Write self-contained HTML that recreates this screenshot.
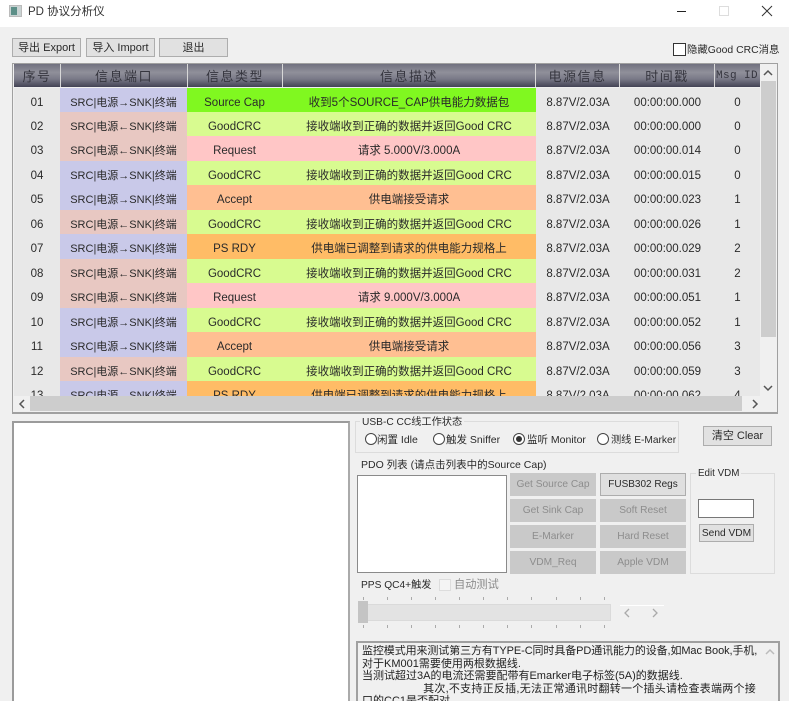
<!DOCTYPE html>
<html><head><meta charset="utf-8">
<style>
html,body{margin:0;padding:0;background:#f0f0f0;width:789px;height:701px;overflow:hidden}
#w{position:relative;width:789px;height:701px;overflow:hidden;font-family:"Liberation Sans","Noto Sans CJK SC",sans-serif;font-size:11px;color:#2a2a2a;background:#f0f0f0;filter:blur(.3px)}
.a{position:absolute;box-sizing:border-box;white-space:nowrap}
.btn{position:absolute;box-sizing:border-box;background:#e1e1e1;border:1px solid #adadad;text-align:center;color:#2a2a2a;font-size:11px}
.dis{position:absolute;box-sizing:border-box;background:#c9c9c9;text-align:center;color:#8d8d8d;font-size:10.2px;height:23px;line-height:23px;width:86px}
.h{position:absolute;top:64px;height:24px;line-height:25px;text-align:center;font-size:13px;color:#36363f;background:linear-gradient(#70707f,#90909a 35%,#7a7a88 62%,#3c3c4e);border-right:1px solid #d8d8d8;box-sizing:border-box;letter-spacing:1.5px;overflow:hidden}
.tb{position:absolute;left:14px;top:87px;width:746px;height:309px;overflow:hidden;background:#efefef}
.r{position:absolute;left:0;width:746px;height:25px;line-height:31px;font-size:11.5px}
.r div{position:absolute;top:0;height:25px;text-align:center;overflow:hidden;white-space:nowrap;box-sizing:border-box}
.c1{left:0;width:46px;background:#e8e8e8}
.c2{left:46px;width:127px;font-size:11px}
.c3{left:173px;width:95px}
.c4{left:268px;width:254px}
.c5{left:522px;width:84px;background:#e8e8e8}
.c6{left:606px;width:95px;background:#e8e8e8}
.c7{left:701px;width:45px;background:#e8e8e8}
.b{background:#c9c9e9}.p{background:#e8c8c2}
.g{background:#d8fb90}.s{background:#80f820}.q{background:#ffc6c6}.k{background:#ffbf92}.y{background:#ffbc66}
.radio{position:absolute;width:12px;height:12px;border:1px solid #444;border-radius:50%;background:#fff;box-sizing:border-box}
.tick{position:absolute;width:1px;height:3px;background:#aaa}
</style></head><body><div id="w">
<div class="a" style="left:0;top:0;width:789px;height:27px;background:#fff"></div>
<div class="a" style="left:9px;top:5px;width:13px;height:12px;background:#c9d3d3;border:1px solid #bbb"><div style="width:6px;height:8px;margin:1px;background:#5c8f88"></div></div>
<div class="a" style="left:28px;top:4px;font-size:11.5px;line-height:16px;color:#333">PD 协议分析仪</div>
<div class="a" style="left:677px;top:11px;width:9px;height:1px;background:#222"></div>
<div class="a" style="left:719px;top:6px;width:10px;height:10px;border:1px solid #ddd"></div>
<svg class="a" style="left:761px;top:5px" width="12" height="12" viewBox="0 0 12 12"><path d="M1 1L11 11M11 1L1 11" stroke="#333" stroke-width="1" fill="none"/></svg>

<div class="btn" style="left:12px;top:38px;width:69px;height:19px;line-height:18px">导出 Export</div>
<div class="btn" style="left:86px;top:38px;width:69px;height:19px;line-height:18px">导入 Import</div>
<div class="btn" style="left:159px;top:38px;width:69px;height:19px;line-height:18px">退出</div>

<div class="a" style="left:673px;top:43px;width:13px;height:13px;border:1px solid #333;background:#fff"></div>
<div class="a" style="left:687px;top:44px;font-size:10.4px;line-height:14px">隐藏Good CRC消息</div>

<div class="a" style="left:12px;top:63px;width:766px;height:351px;border:1px solid #a0a0a0;border-bottom:2px solid #a0a0a0;background:#f0f0f0"></div>
<div class="h" style="left:14px;width:47px">序号</div>
<div class="h" style="left:61px;width:127px">信息端口</div>
<div class="h" style="left:188px;width:95px">信息类型</div>
<div class="h" style="left:283px;width:253px">信息描述</div>
<div class="h" style="left:536px;width:84px">电源信息</div>
<div class="h" style="left:620px;width:95px">时间戳</div>
<div class="h" style="left:715px;width:45px;font-family:'Liberation Mono','Noto Sans CJK SC',monospace;font-size:11px;letter-spacing:.4px;border:0;text-align:left;padding-left:1px">Msg&nbsp;ID</div>

<div class="tb">
<div class="r" style="top:.5px"><div class="c1">01</div><div class="c2 b">SRC|电源→SNK|终端</div><div class="c3 s">Source Cap</div><div class="c4 s">收到5个SOURCE_CAP供电能力数据包</div><div class="c5">8.87V/2.03A</div><div class="c6">00:00:00.000</div><div class="c7">0</div></div>
<div class="r" style="top:25px"><div class="c1">02</div><div class="c2 p">SRC|电源←SNK|终端</div><div class="c3 g">GoodCRC</div><div class="c4 g">接收端收到正确的数据并返回Good CRC</div><div class="c5">8.87V/2.03A</div><div class="c6">00:00:00.000</div><div class="c7">0</div></div>
<div class="r" style="top:49.4px"><div class="c1">03</div><div class="c2 p">SRC|电源←SNK|终端</div><div class="c3 q">Request</div><div class="c4 q">请求 5.000V/3.000A</div><div class="c5">8.87V/2.03A</div><div class="c6">00:00:00.014</div><div class="c7">0</div></div>
<div class="r" style="top:73.9px"><div class="c1">04</div><div class="c2 b">SRC|电源→SNK|终端</div><div class="c3 g">GoodCRC</div><div class="c4 g">接收端收到正确的数据并返回Good CRC</div><div class="c5">8.87V/2.03A</div><div class="c6">00:00:00.015</div><div class="c7">0</div></div>
<div class="r" style="top:98.3px"><div class="c1">05</div><div class="c2 b">SRC|电源→SNK|终端</div><div class="c3 k">Accept</div><div class="c4 k">供电端接受请求</div><div class="c5">8.87V/2.03A</div><div class="c6">00:00:00.023</div><div class="c7">1</div></div>
<div class="r" style="top:122.8px"><div class="c1">06</div><div class="c2 p">SRC|电源←SNK|终端</div><div class="c3 g">GoodCRC</div><div class="c4 g">接收端收到正确的数据并返回Good CRC</div><div class="c5">8.87V/2.03A</div><div class="c6">00:00:00.026</div><div class="c7">1</div></div>
<div class="r" style="top:147.2px"><div class="c1">07</div><div class="c2 b">SRC|电源→SNK|终端</div><div class="c3 y">PS RDY</div><div class="c4 y">供电端已调整到请求的供电能力规格上</div><div class="c5">8.87V/2.03A</div><div class="c6">00:00:00.029</div><div class="c7">2</div></div>
<div class="r" style="top:171.7px"><div class="c1">08</div><div class="c2 p">SRC|电源←SNK|终端</div><div class="c3 g">GoodCRC</div><div class="c4 g">接收端收到正确的数据并返回Good CRC</div><div class="c5">8.87V/2.03A</div><div class="c6">00:00:00.031</div><div class="c7">2</div></div>
<div class="r" style="top:196.1px"><div class="c1">09</div><div class="c2 p">SRC|电源←SNK|终端</div><div class="c3 q">Request</div><div class="c4 q">请求 9.000V/3.000A</div><div class="c5">8.87V/2.03A</div><div class="c6">00:00:00.051</div><div class="c7">1</div></div>
<div class="r" style="top:220.6px"><div class="c1">10</div><div class="c2 b">SRC|电源→SNK|终端</div><div class="c3 g">GoodCRC</div><div class="c4 g">接收端收到正确的数据并返回Good CRC</div><div class="c5">8.87V/2.03A</div><div class="c6">00:00:00.052</div><div class="c7">1</div></div>
<div class="r" style="top:245px"><div class="c1">11</div><div class="c2 b">SRC|电源→SNK|终端</div><div class="c3 k">Accept</div><div class="c4 k">供电端接受请求</div><div class="c5">8.87V/2.03A</div><div class="c6">00:00:00.056</div><div class="c7">3</div></div>
<div class="r" style="top:269.5px"><div class="c1">12</div><div class="c2 p">SRC|电源←SNK|终端</div><div class="c3 g">GoodCRC</div><div class="c4 g">接收端收到正确的数据并返回Good CRC</div><div class="c5">8.87V/2.03A</div><div class="c6">00:00:00.059</div><div class="c7">3</div></div>
<div class="r" style="top:293.9px"><div class="c1">13</div><div class="c2 b">SRC|电源→SNK|终端</div><div class="c3 y">PS RDY</div><div class="c4 y">供电端已调整到请求的供电能力规格上</div><div class="c5">8.87V/2.03A</div><div class="c6">00:00:00.062</div><div class="c7">4</div></div>
</div>

<!-- vertical scrollbar -->
<div class="a" style="left:760px;top:65px;width:16px;height:331px;background:#f0f0f0"></div>
<div class="a" style="left:761px;top:81px;width:15px;height:256px;background:#cdcdcd"></div>
<svg class="a" style="left:762px;top:69px" width="12" height="8"><path d="M2 6L6 2L10 6" stroke="#555" stroke-width="1.5" fill="none"/></svg>
<svg class="a" style="left:762px;top:384px" width="12" height="8"><path d="M2 2L6 6L10 2" stroke="#555" stroke-width="1.5" fill="none"/></svg>
<!-- horizontal scrollbar -->
<div class="a" style="left:14px;top:396px;width:762px;height:15px;background:#f0f0f0"></div>
<div class="a" style="left:30px;top:396px;width:712px;height:15px;background:#cdcdcd"></div>
<svg class="a" style="left:17px;top:398px" width="10" height="12"><path d="M7 2L3 6L7 10" stroke="#555" stroke-width="1.5" fill="none"/></svg>
<svg class="a" style="left:750px;top:398px" width="10" height="12"><path d="M3 2L7 6L3 10" stroke="#555" stroke-width="1.5" fill="none"/></svg>

<!-- left log -->
<div class="a" style="left:12px;top:421px;width:338px;height:290px;background:#fff;border:2px solid #9b9b9b;border-right-color:#aaa"></div>

<!-- CC group -->
<div class="a" style="left:355px;top:421px;width:324px;height:32px;border:1px solid #dcdcdc"></div>
<div class="a" style="left:360px;top:416px;background:#f0f0f0;padding:0 2px;font-size:10.2px;line-height:14px">USB-C CC线工作状态</div>
<div class="radio" style="left:365px;top:433px"></div><div class="a" style="left:377px;top:433px;line-height:15px;font-size:10.5px">闲置 Idle</div>
<div class="radio" style="left:433px;top:433px"></div><div class="a" style="left:446px;top:433px;line-height:15px;font-size:10.5px">触发 Sniffer</div>
<div class="radio" style="left:513px;top:433px"></div><div class="a" style="left:516px;top:436px;width:6px;height:6px;border-radius:50%;background:#333"></div><div class="a" style="left:527px;top:433px;line-height:15px;font-size:10.5px">监听 Monitor</div>
<div class="radio" style="left:597px;top:433px"></div><div class="a" style="left:611px;top:433px;line-height:15px;font-size:10.2px">测线 E-Marker</div>

<div class="btn" style="left:703px;top:426px;width:69px;height:20px;line-height:19px">清空 Clear</div>

<div class="a" style="left:361px;top:458px;font-size:10.5px;line-height:15px">PDO 列表 (请点击列表中的Source Cap)</div>
<div class="a" style="left:357px;top:475px;width:150px;height:98px;background:#fff;border:1px solid #8a8a8a"></div>

<div class="dis" style="left:510px;top:473px">Get Source Cap</div>
<div class="btn" style="left:600px;top:473px;width:86px;height:23px;line-height:21px;background:#dfdfdf;font-size:10px">FUSB302 Regs</div>
<div class="dis" style="left:510px;top:499px">Get Sink Cap</div>
<div class="dis" style="left:600px;top:499px">Soft Reset</div>
<div class="dis" style="left:510px;top:525px">E-Marker</div>
<div class="dis" style="left:600px;top:525px">Hard Reset</div>
<div class="dis" style="left:510px;top:551px">VDM_Req</div>
<div class="dis" style="left:600px;top:551px">Apple VDM</div>

<div class="a" style="left:690px;top:473px;width:85px;height:101px;border:1px solid #dcdcdc"></div>
<div class="a" style="left:696px;top:466px;background:#f0f0f0;padding:0 2px;font-size:9.8px;line-height:15px">Edit VDM</div>
<div class="a" style="left:698px;top:499px;width:56px;height:19px;background:#fff;border:1px solid #777"></div>
<div class="btn" style="left:699px;top:524px;width:55px;height:18px;line-height:17px;font-size:10.2px">Send VDM</div>

<div class="a" style="left:361px;top:578px;font-size:10.2px;line-height:15px">PPS QC4+触发</div>
<div class="a" style="left:439px;top:579px;width:12px;height:12px;background:#f4f4f4;border:1px solid #ddd"></div>
<div class="a" style="left:454px;top:578px;font-size:11.2px;line-height:15px;color:#8c8c8c">自动测试</div>

<div class="tick" style="left:363px;top:597px"></div><div class="tick" style="left:387px;top:597px"></div><div class="tick" style="left:411px;top:597px"></div><div class="tick" style="left:435px;top:597px"></div><div class="tick" style="left:459px;top:597px"></div><div class="tick" style="left:483px;top:597px"></div><div class="tick" style="left:507px;top:597px"></div><div class="tick" style="left:531px;top:597px"></div><div class="tick" style="left:556px;top:597px"></div>
<div class="tick" style="left:580px;top:597px"></div><div class="tick" style="left:604px;top:597px"></div>
<div class="a" style="left:358px;top:604px;width:253px;height:17px;background:#e3e3e3;border:1px solid #dadada"></div>
<div class="a" style="left:358px;top:601px;width:10px;height:22px;background:#c4c4c4"></div>
<div class="tick" style="left:363px;top:625px"></div><div class="tick" style="left:387px;top:625px"></div><div class="tick" style="left:411px;top:625px"></div><div class="tick" style="left:435px;top:625px"></div><div class="tick" style="left:459px;top:625px"></div><div class="tick" style="left:483px;top:625px"></div><div class="tick" style="left:507px;top:625px"></div><div class="tick" style="left:531px;top:625px"></div><div class="tick" style="left:556px;top:625px"></div>
<div class="tick" style="left:580px;top:625px"></div><div class="tick" style="left:604px;top:625px"></div>
<div class="a" style="left:620px;top:605px;width:44px;height:1px;background:#fff"></div>
<svg class="a" style="left:620px;top:606px" width="44" height="14"><path d="M9 3L5 7L9 11M33 3L37 7L33 11" stroke="#aaa" stroke-width="1.3" fill="none"/></svg>

<div class="a" style="left:356px;top:641px;width:424px;height:70px;background:#f0f0f0;border:2px solid #a0a0a0"></div>
<div class="a" style="left:362px;top:645px;width:396px;font-size:11px;line-height:12.5px;color:#222;overflow:hidden;height:56px"><span style="letter-spacing:-.1px">监控模式用来测试第三方有TYPE-C同时具备PD通讯能力的设备,如Mac Book,手机,</span><br>对于KM001需要使用两根数据线.<br>当测试超过3A的电流还需要配带有Emarker电子标签(5A)的数据线.<br>&nbsp;&nbsp;&nbsp;&nbsp;&nbsp;&nbsp;&nbsp;&nbsp;&nbsp;&nbsp;&nbsp;&nbsp;&nbsp;&nbsp;&nbsp;&nbsp;&nbsp;&nbsp;&nbsp;&nbsp;<span style="letter-spacing:.25px">其次,不支持正反插,无法正常通讯时翻转一个插头请检查表端两个接</span><br>口的CC1是否配对.</div>
<svg class="a" style="left:764px;top:648px" width="12" height="8"><path d="M2 6L6 2L10 6" stroke="#bbb" stroke-width="1.5" fill="none"/></svg>
</div></body></html>
